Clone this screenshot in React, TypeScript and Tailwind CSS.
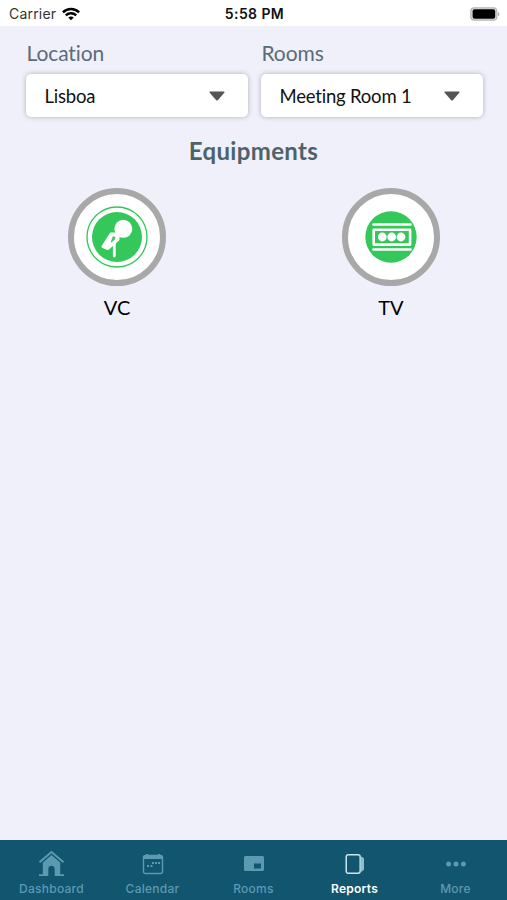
import React from "react";

type Tab = { label: string; icon: React.ReactNode; active?: boolean };

const StatusBar = () => (
  <header className="grid h-[26px] shrink-0 grid-cols-3 items-center bg-white pl-[9px] pr-[7px] pt-px font-['Inter',sans-serif] text-[#111]">
    <div className="flex items-center gap-[6px]">
      <span className="text-[14px] tracking-[0.2px] text-[#333]">Carrier</span>
      <svg width="18" height="14" viewBox="0 0 19 14" fill="none" stroke="#000" strokeWidth="2.7">
        <path d="M1 5.2C5.7.6 13.3.6 18 5.2" />
        <path d="M4 8.4c3.1-3 7.9-3 11 0" />
        <path d="M9.5 13.6 6.6 10.7c1.7-1.5 4.1-1.5 5.8 0Z" fill="#000" stroke="none" />
      </svg>
    </div>
    <div className="text-center text-[14px] font-semibold tracking-[0.4px]">5:58 PM</div>
    <div className="flex justify-end">
      <svg width="30" height="14" viewBox="0 0 30 14">
        <rect x=".8" y=".8" width="26" height="12.4" rx="3.5" fill="#ddd" stroke="#b5b5b5" strokeWidth="1.2" />
        <rect x="2.6" y="2.3" width="22.6" height="9.4" rx="2" fill="#000" />
        <path d="M28 4.7c1.8.8 1.8 3.8 0 4.6Z" fill="#aaa" />
      </svg>
    </div>
  </header>
);

const SelectField = ({ label, value }: { label: string; value: string }) => (
  <div className="flex w-[222px] flex-col">
    <span className="h-[48px] pl-[0.5px] pt-[13px] text-[21px] leading-[27px] tracking-[-0.1px] text-[#5b6b7a]">{label}</span>
    <button className="flex h-[43px] items-center justify-between rounded-[5px] bg-white pl-[18.5px] pr-[23px] text-[18.5px] tracking-[-0.2px] text-[#111] shadow-[0_0_5px_rgba(0,0,0,0.28)]">
      <span className="pt-[2px]">{value}</span>
      <svg width="16" height="10" viewBox="0 0 16 10" fill="#555">
        <path d="M1 .5h14q1 .2.3 1.2L9 8.9q-1 1-2 0L.7 1.7Q0 .7 1 .5Z" />
      </svg>
    </button>
  </div>
);

const MicIcon = () => (
  <svg width="62" height="62" viewBox="0 0 62 62">
    <circle cx="31" cy="31" r="30" fill="none" stroke="#34c759" strokeWidth="1.3" />
    <circle cx="31" cy="31" r="25" fill="#34c759" />
    <circle cx="37.3" cy="22.8" r="9" fill="#fff" />
    {/* handle with the slot cut into it */}
    <path
      d="M25 28h5l2 2.5v3L22 42.5l-5-2Z"
      fill="#fff"
      stroke="#fff"
      strokeWidth="3"
      strokeLinejoin="round"
    />
    <path d="m27 30.5 2.2.8-1 2.8-3.2 2.2Z" fill="#34c759" stroke="#34c759" strokeWidth=".5" />
    <path d="M28.3 36v14" stroke="#fff" strokeWidth="2.8" strokeLinecap="round" />
  </svg>
);

const ScreenIcon = () => (
  <svg width="52" height="52" viewBox="0 0 52 52">
    <circle cx="26" cy="26" r="25.7" fill="#34c759" />
    <g fill="none" stroke="#fff" strokeLinecap="round" strokeLinejoin="round">
      <path d="M8.5 13.5h37M8.5 38.5h37" strokeWidth="2.6" />
      <rect x="8.7" y="18.8" width="36.4" height="14.8" strokeWidth="2.6" />
    </g>
    <g fill="#fff">
      <circle cx="17.3" cy="26" r="4.4" />
      <circle cx="26.7" cy="26" r="4.4" />
      <circle cx="36" cy="26" r="4.4" />
    </g>
  </svg>
);

const Equipment = ({ name, children }: { name: string; children: React.ReactNode }) => (
  <div className="flex w-[98px] flex-col items-center">
    <div className="flex h-[98px] w-[98px] items-center justify-center rounded-full border-6 border-[#a8a8a8] bg-white">
      {children}
    </div>
    <span className="mt-[7px] text-[20px] leading-[28px] text-black">{name}</span>
  </div>
);

const tabs: Tab[] = [
  {
    label: "Dashboard",
    icon: (
      <svg width="27" height="27" viewBox="0 0 27 27" fill="currentColor">
        <path d="M1.5 12.2 13.5 2l12 10.2" fill="none" stroke="currentColor" strokeWidth="2" />
        <path d="m13.5 5 8.7 7.4V24.3H26V26h-9.3v-7c0-4.2-6.4-4.2-6.4 0v7H1v-1.7h3.8V12.4Z" />
      </svg>
    ),
  },
  {
    label: "Calendar",
    icon: (
      <svg width="22" height="22" viewBox="0 0 22 22" fill="currentColor">
        <rect x="1.5" y="2.5" width="19" height="18" rx="2" fill="none" stroke="currentColor" strokeWidth="1.4" />
        <path d="M2 3h18v3H2ZM4 1h2v2H4ZM16 1h2v2h-2Z" />
        <path d="M5 12h2v2H5ZM8.5 12h2v2h-2ZM10 9h2v2h-2ZM13 9h2v2h-2ZM16 9h2v2h-2Z" />
      </svg>
    ),
  },
  {
    label: "Rooms",
    icon: (
      <svg width="20" height="16" viewBox="0 0 20 16">
        <path
          fillRule="evenodd"
          fill="currentColor"
          d="M1.5 0h17Q20 0 20 1.5v12q0 1.5-1.5 1.5h-17Q0 15 0 13.5v-12Q0 0 1.5 0ZM10 7.5v5h7v-5Z"
        />
      </svg>
    ),
  },
  {
    label: "Reports",
    active: true,
    icon: (
      <svg width="20" height="22" viewBox="0 0 20 22">
        <rect x="1.2" y="1.7" width="14" height="18.6" rx="2.2" fill="none" stroke="#c9e6ef" strokeWidth="1.5" />
        <path d="M15.5 3 19 5.2v11.6l-3.5 2.7Z" fill="#8fbccb" />
      </svg>
    ),
  },
  {
    label: "More",
    icon: (
      <svg width="20" height="6" viewBox="0 0 20 6" fill="currentColor">
        <circle cx="2.6" cy="3" r="2.5" />
        <circle cx="10" cy="3" r="2.5" />
        <circle cx="17.4" cy="3" r="2.5" />
      </svg>
    ),
  },
];

const TabBar = () => (
  <nav className="grid h-[60px] shrink-0 grid-cols-5 bg-[#11556f] px-px font-['Inter',sans-serif] text-[12px]">
    {tabs.map((tab) => (
      <a
        key={tab.label}
        className={`flex flex-col items-center pt-[9px] tracking-[0.25px] ${
          tab.active ? "font-semibold text-white" : "font-medium text-[#5d9ab2]"
        }`}
      >
        <span className="flex h-[29px] items-center">{tab.icon}</span>
        <span className="mt-[3px] leading-4">{tab.label}</span>
      </a>
    ))}
  </nav>
);

export default function App() {
  return (
    <div className="flex h-screen w-full flex-col overflow-hidden bg-[#eff0f9] font-['Lato',sans-serif] [font-variant-ligatures:none]">
      <StatusBar />
      <main className="flex-1">
        <div className="flex gap-[13px] pl-[26px]">
          <SelectField label="Location" value="Lisboa" />
          <SelectField label="Rooms" value="Meeting Room 1" />
        </div>
        <h1 className="mt-[18px] text-center text-[24px] font-bold leading-8 tracking-[0.35px] text-[#4d626b]">Equipments</h1>
        <div className="mt-[21px] flex justify-between pl-[68px] pr-[67px]">
          <Equipment name="VC">
            <MicIcon />
          </Equipment>
          <Equipment name="TV">
            <ScreenIcon />
          </Equipment>
        </div>
      </main>
      <TabBar />
    </div>
  );
}
